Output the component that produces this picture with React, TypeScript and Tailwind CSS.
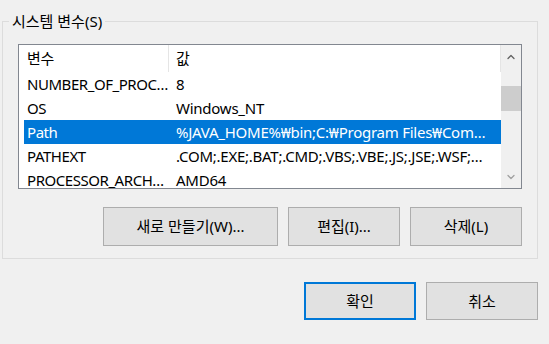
import { ChevronDown, ChevronUp } from 'lucide-react';

const rows = [
  { name: 'NUMBER_OF_PROC…', value: '8' },
  { name: 'OS', value: 'Windows_NT' },
  { name: 'Path', value: '%JAVA_HOME%₩bin;C:₩Program Files₩Com…', selected: true },
  { name: 'PATHEXT', value: '.COM;.EXE;.BAT;.CMD;.VBS;.VBE;.JS;.JSE;.WSF;…' },
  { name: 'PROCESSOR_ARCH…', value: 'AMD64' },
];

const font = "font-['Segoe_UI','Noto_Sans','Noto_Sans_CJK_KR',sans-serif]";

export default function App() {
  return (
    <div className={`h-[344px] w-[549px] overflow-hidden bg-[#f0f0f0] text-[15px] text-black ${font}`}>
      <div className="relative mt-[21px] ml-[2px] h-[238px] w-[536px] border border-[#dcdcdc] px-[15px] pt-[22px]">
        <span className="absolute -top-[11px] left-[6px] bg-[#f0f0f0] px-[3px] leading-[20px]">
          시스템 변수(S)
        </span>

        <div className="flex h-[145px] w-[504px] border border-[#828790] bg-white">
          <div className="flex-1 overflow-hidden tracking-[-0.25px]">
            <div className="flex h-[27px] items-center">
              <div className="flex h-full w-[150px] items-center border-r border-[#e5e5e5] pl-[8px]">변수</div>
              <div className="flex h-full flex-1 items-center border-r border-[#e5e5e5] pl-[7px]">값</div>
            </div>
            {rows.map((row) => (
              <div
                key={row.name}
                className={`ml-[5px] flex h-[24px] items-center whitespace-nowrap leading-[16px] ${
                  row.selected ? 'bg-[#0078d7] text-white' : ''
                }`}
              >
                <div className="w-[145px] shrink-0 pl-[3px] tracking-[-0.45px]">{row.name}</div>
                <div className="min-w-0 flex-1 pl-[7px]">{row.value}</div>
              </div>
            ))}
          </div>

          <div className="flex w-[20px] flex-col bg-[#f0f0f0]">
            <div className="flex h-[20px] items-center justify-center pt-[4px]">
              <ChevronUp className="h-[12px] w-[12px] text-[#606060]" strokeWidth={2.5} />
            </div>
            <div className="mt-[21px] h-[25px] bg-[#cdcdcd]" />
            <div className="flex-1" />
            <div className="flex h-[20px] items-center justify-center pb-[2px]">
              <ChevronDown className="h-[12px] w-[12px] text-[#a0a0a0]" strokeWidth={2.5} />
            </div>
          </div>
        </div>

        <div className="mt-[18px] flex w-[504px] justify-end gap-[10px]">
          <button type="button" className="h-[39px] w-[175px] border border-[#adadad] bg-[#e1e1e1]">
            새로 만들기(W)...
          </button>
          <button type="button" className="h-[39px] w-[112px] border border-[#adadad] bg-[#e1e1e1]">
            편집(I)...
          </button>
          <button type="button" className="h-[39px] w-[112px] border border-[#adadad] bg-[#e1e1e1]">
            삭제(L)
          </button>
        </div>
      </div>

      <div className="mt-[23px] mr-[11px] flex justify-end gap-[10px]">
        <button type="button" className="h-[38px] w-[112px] border-2 border-[#0078d7] bg-[#e1e1e1]">
          확인
        </button>
        <button type="button" className="h-[38px] w-[112px] border border-[#adadad] bg-[#e1e1e1]">
          취소
        </button>
      </div>
    </div>
  );
}
